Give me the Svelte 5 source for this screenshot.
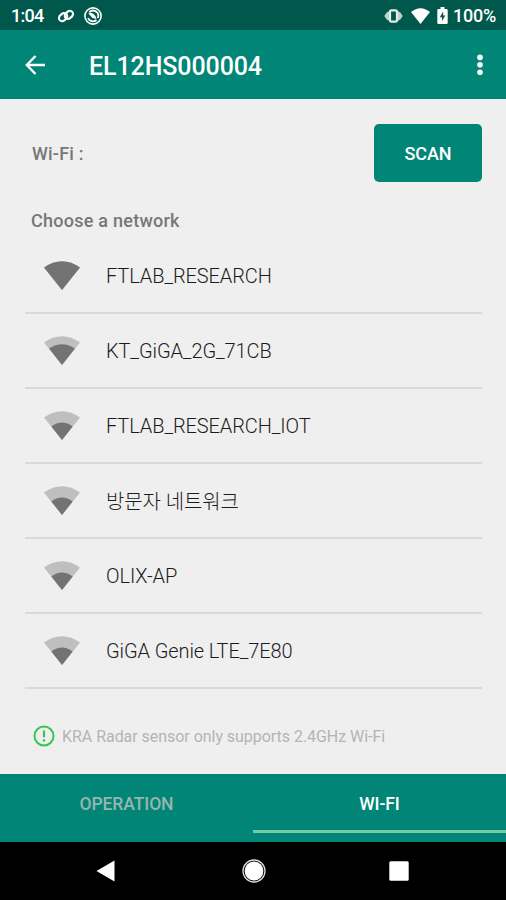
<script lang="ts">
  type Network = { name: string; level: 'full' | 'high' | 'medium' };

  const networks: Network[] = [
    { name: 'FTLAB_RESEARCH', level: 'full' },
    { name: 'KT_GiGA_2G_71CB', level: 'high' },
    { name: 'FTLAB_RESEARCH_IOT', level: 'medium' },
    { name: '방문자 네트워크', level: 'medium' },
    { name: 'OLIX-AP', level: 'medium' },
    { name: 'GiGA Genie LTE_7E80', level: 'medium' }
  ];

  const fans = {
    full: 'M0 6.5Q18 -6 36 6.5L18 29Z',
    high: 'M5 12.6Q18 4 31 12.6L18 29Z',
    medium: 'M7.3 15.4Q18 7.6 28.7 15.4L18 29Z'
  };

  let tab = $state('wifi');
</script>

<div class="screen">
  <div class="status-bar">
    <span class="clock">1:04</span>
    <svg class="link" width="18" height="16" viewBox="0 0 18 16" fill="none" stroke="#fff" stroke-width="2.1">
      <g transform="rotate(-42 9 8)">
        <rect x="1.6" y="3.7" width="9" height="6.4" rx="3.2" />
        <rect x="7.4" y="5.9" width="9" height="6.4" rx="3.2" />
      </g>
    </svg>
    <svg class="badge" width="20" height="20" viewBox="0 0 20 20" fill="none" stroke="#fff">
      <circle cx="10" cy="10" r="8.1" stroke-width="1.6" />
      <path d="M5 12A5.3 5.3 0 0 0 13.5 14M6.3 6.3A5.2 5.2 0 0 1 14.8 12" stroke-width="1.8" />
      <path d="M5.2 7.6C8.5 6 12 7.6 13.6 12.8C10.8 13 8.8 12 8 10.3Z" fill="#fff" stroke="none" />
    </svg>
    <span class="spacer"></span>
    <svg class="vibrate" width="19" height="14" viewBox="0 0 19 14">
      <path d="M5.5 2L2.6 3.6L.3 7L2.6 10.4L5.5 12ZM13.5 2L16.4 3.6L18.7 7L16.4 10.4L13.5 12Z" fill="#b9d2ce" />
      <rect x="6" y="1.4" width="7" height="11.2" rx="1.5" fill="#00574b" stroke="#e2edeb" stroke-width="2.2" />
    </svg>
    <svg class="signal" width="19" height="16" viewBox="0 0 19 16">
      <path d="M0 4Q9.5 -3.6 19 4L9.5 16Z" fill="#fff" />
    </svg>
    <svg class="battery" width="11" height="17" viewBox="0 0 11 17">
      <path d="M3.5 0h4v2H9.5Q10.7 2 10.7 3.2V15.8Q10.7 17 9.5 17H1.5Q.3 17 .3 15.8V3.2Q.3 2 1.5 2H3.5Z" fill="#fff" />
      <path d="M6.2 4.5L2.8 10.2H5V14L8.3 8.4H6.2Z" fill="#00574b" />
    </svg>
    <span class="percent">100%</span>
  </div>

  <header>
    <svg width="22" height="20" viewBox="0 0 22 20" fill="none" stroke="#fff" stroke-width="2.4">
      <path d="M20 10H2.5M10.5 1L1.8 10L10.5 19" />
    </svg>
    <h1>EL12HS000004</h1>
    <svg class="more" width="6" height="22" viewBox="0 0 6 22" fill="#fff">
      <circle cx="3" cy="3.4" r="2.8" />
      <circle cx="3" cy="10.8" r="2.8" />
      <circle cx="3" cy="18.2" r="2.8" />
    </svg>
  </header>

  <main>
    <div class="current">
      <span class="wifi-label">Wi-Fi :</span>
      <button class="scan">SCAN</button>
    </div>

    <h2>Choose a network</h2>

    <ul>
      {#each networks as network}
        <li>
          <svg width="36" height="29" viewBox="0 0 36 29">
            <path d={fans.full} fill="#bfbfbf" />
            <path d={fans[network.level]} fill="#737373" />
          </svg>
          <span>{network.name}</span>
        </li>
      {/each}
    </ul>

    <div class="note">
      <svg width="22" height="22" viewBox="0 0 22 22">
        <circle cx="11" cy="11" r="9.5" fill="none" stroke="#38c550" stroke-width="2" />
        <path d="M11 5.5V12.3M11 14.3V16.5" stroke="#38c550" stroke-width="2.2" />
      </svg>
      <span>KRA Radar sensor only supports 2.4GHz Wi-Fi</span>
    </div>
  </main>

  <div class="tabs">
    <button class:active={tab === 'operation'} onclick={() => (tab = 'operation')}>OPERATION</button>
    <button class:active={tab === 'wifi'} onclick={() => (tab = 'wifi')}>WI-FI</button>
  </div>

  <nav>
    <svg width="19" height="22" viewBox="0 0 19 22"><path d="M18.5 .5V21.5L.5 11Z" fill="#fff" /></svg>
    <svg class="home" width="24" height="24" viewBox="0 0 24 24">
      <circle cx="12" cy="12" r="11" fill="none" stroke="#ddd" stroke-width="1.3" />
      <circle cx="12" cy="12" r="9.4" fill="#fff" />
    </svg>
    <svg width="20" height="20" viewBox="0 0 20 20"><rect x=".3" y=".3" width="19.4" height="19.4" rx="1.5" fill="#fff" /></svg>
  </nav>
</div>

<style>
  :global(body) {
    margin: 0;
  }

  .screen {
    display: flex;
    flex-direction: column;
    width: 506px;
    height: 900px;
    overflow: hidden;
    background: #efefef;
    font-family: Roboto, 'Noto Sans CJK KR', sans-serif;
    white-space: nowrap;
  }

  svg {
    display: block;
    flex: none;
  }

  button {
    padding: 0;
    border: 0;
    font: inherit;
  }

  .status-bar {
    display: flex;
    align-items: center;
    box-sizing: border-box;
    height: 30px;
    padding: 1px 10px 0 11px;
    background: #00574b;
    color: #fff;
    font-size: 18px;
    font-weight: 500;
  }

  .clock {
    width: 46px;
    letter-spacing: -0.7px;
  }

  .badge {
    margin-left: 8px;
  }

  .spacer {
    flex: 1;
  }

  .signal {
    margin-left: 8px;
  }

  .battery {
    margin-left: 7px;
  }

  .percent {
    width: 43px;
    margin-left: 5px;
    letter-spacing: -0.2px;
  }

  header {
    display: flex;
    align-items: center;
    box-sizing: border-box;
    height: 69px;
    padding: 0 23px 0 25px;
    background: #008577;
    color: #fff;
  }

  h1 {
    flex: 1;
    margin: 3px 0 0 42px;
    font-size: 25px;
    font-weight: 500;
    letter-spacing: -0.1px;
  }

  main {
    height: 675px;
  }

  .current {
    display: flex;
    align-items: center;
    justify-content: space-between;
    padding: 25px 24px 0 32px;
    color: #777;
    font-size: 18px;
    font-weight: 500;
  }

  .wifi-label {
    letter-spacing: 0.2px;
  }

  .scan {
    width: 108px;
    height: 58px;
    border-radius: 5px;
    background: #008577;
    color: #fff;
    font-size: 18px;
    font-weight: 500;
    letter-spacing: -0.1px;
  }

  h2 {
    height: 57px;
    margin: 0 0 0 31px;
    color: #777;
    font-size: 18px;
    font-weight: 500;
    line-height: 78px;
    letter-spacing: 0.25px;
  }

  ul {
    margin: 0 24px 0 25px;
    padding: 0;
    list-style: none;
  }

  li {
    display: flex;
    align-items: center;
    box-sizing: border-box;
    height: 75px;
    border-bottom: 2px solid #d9d9d9;
    padding-left: 19px;
    color: #1c1c1c;
    font-size: 20px;
    font-weight: 300;
    letter-spacing: -0.1px;
  }

  li span {
    margin-left: 26px;
  }

  .note {
    display: flex;
    align-items: center;
    height: 22px;
    margin: 36px 0 0 33px;
    color: #b4b4b4;
    font-size: 16px;
    letter-spacing: -0.04px;
  }

  .note span {
    margin-left: 7px;
  }

  .tabs {
    display: flex;
    height: 68px;
    background: #008577;
  }

  .tabs button {
    flex: 1;
    box-sizing: border-box;
    height: 59px;
    padding-top: 3px;
    border-bottom: 3px solid transparent;
    background: none;
    color: #98b5b0;
    font-size: 17.5px;
    font-weight: 500;
    letter-spacing: -0.1px;
  }

  .tabs .active {
    border-bottom-color: #72cba5;
    color: #fff;
  }

  nav {
    display: flex;
    align-items: center;
    justify-content: space-between;
    height: 58px;
    padding: 0 97px 0 96px;
    background: #000;
  }

  .home {
    margin-left: 3px;
  }
</style>
